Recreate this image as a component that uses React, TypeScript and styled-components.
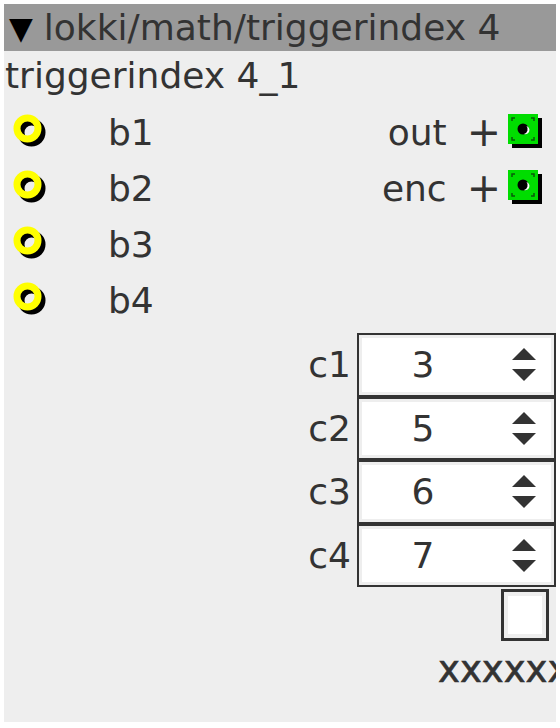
import React from "react";
import styled, { createGlobalStyle } from "styled-components";

const Global = createGlobalStyle`
  html, body { margin: 0; padding: 0; background: #ffffff; }
  body { font-family: "DejaVu Sans", "Liberation Sans", sans-serif; }
`;

const Page = styled.div`
  padding: 4px;
  width: 560px;
  height: 728px;
  box-sizing: border-box;
`;

const Panel = styled.div`
  width: 552px;
  height: 718px;
  background: #eeeeee;
  overflow: hidden;
  display: flex;
  flex-direction: column;
  color: #333333;
  font-size: 36px;
`;

const Header = styled.div`
  height: 47px;
  background: #999999;
  display: flex;
  align-items: center;
  padding-left: 5px;
  gap: 11px;
  white-space: nowrap;
`;

const Triangle = styled.span`
  color: #000000;
  font-size: 31px;
`;

const InstanceName = styled.div`
  height: 53px;
  padding-left: 1px;
  line-height: 50px;
`;

const IoArea = styled.div`
  display: flex;
  justify-content: space-between;
`;

const Column = styled.div`
  display: flex;
  flex-direction: column;
`;

const IoRow = styled.div<{ $right?: boolean }>`
  height: 56px;
  display: flex;
  align-items: center;
  justify-content: ${(p) => (p.$right ? "flex-end" : "flex-start")};
`;

const InletLabel = styled.span`
  margin-left: 58px;
`;

const OutletLabel = styled.span`
  text-align: right;
`;

const Plus = styled.span`
  font-size: 41px;
  line-height: 1;
  margin-left: 20px;
  margin-right: 6px;
`;

const Params = styled.div`
  margin-top: 5px;
  display: flex;
  flex-direction: column;
  align-items: flex-end;
`;

const ParamRow = styled.div`
  display: flex;
  align-items: center;
  gap: 6px;
`;

const SpinBox = styled.div`
  width: 199px;
  height: 63.5px;
  box-sizing: border-box;
  border: 2px solid #333333;
  background: #ffffff;
  box-shadow: inset 0 0 0 3px #eeeeee;
  display: flex;
  align-items: center;
`;

const SpinValue = styled.span`
  width: 128px;
  text-align: center;
`;

const Arrows = styled.div`
  width: 24px;
  margin-left: auto;
  margin-right: 18px;
  display: flex;
  flex-direction: column;
  gap: 9px;
`;

const CheckRow = styled.div`
  display: flex;
  justify-content: flex-end;
  padding-right: 7px;
  margin-top: 2px;
`;

const CheckBox = styled.div`
  width: 48px;
  height: 52px;
  box-sizing: border-box;
  border: 3px solid #333333;
  background: #ffffff;
  box-shadow: inset 0 0 0 4px #eeeeee;
`;

const Xs = styled.div`
  padding-left: 434px;
  margin-top: 9px;
  white-space: nowrap;
  font-size: 37px;
  line-height: 40px;
  -webkit-text-stroke: 0.6px #333333;
`;

const Inlet = () => (
  <svg width="38" height="38" viewBox="0 0 38 38" style={{ marginLeft: 8 }}>
    <circle cx="19.5" cy="19.5" r="10.5" fill="none" stroke="#000" strokeWidth="7" />
    <circle cx="15.5" cy="15.5" r="10.5" fill="none" stroke="#ffff00" strokeWidth="7" />
  </svg>
);

const Outlet = () => (
  <svg width="38" height="38" viewBox="0 0 38 38" style={{ marginRight: 11 }}>
    <rect x="5" y="5" width="30" height="30" fill="#000" />
    <rect x="1" y="1" width="30" height="30" fill="#00dd00" />
    <g stroke="#0a5a0a" strokeWidth="1.5" fill="none">
      <path d="M5 8 V5 H8" />
      <path d="M24 5 H27 V8" />
      <path d="M5 24 V27 H8" />
      <path d="M24 27 H27 V24" />
    </g>
    <circle cx="16" cy="16" r="5.5" fill="#000" />
    <path d="M19.5 13 A5 5 0 0 1 17 21 A4 4 0 0 0 19.5 13 Z" fill="#fff" />
  </svg>
);

const SpinArrows = () => (
  <Arrows>
    <svg width="24" height="12" viewBox="0 0 24 12">
      <polygon points="12,0 24,12 0,12" fill="#333" />
    </svg>
    <svg width="24" height="12" viewBox="0 0 24 12">
      <polygon points="0,0 24,0 12,12" fill="#333" />
    </svg>
  </Arrows>
);

const inlets = ["b1", "b2", "b3", "b4"];
const outlets = ["out", "enc"];
const params = [
  { label: "c1", value: 3 },
  { label: "c2", value: 5 },
  { label: "c3", value: 6 },
  { label: "c4", value: 7 },
];

export default function App() {
  return (
    <Page>
      <Global />
      <Panel>
        <Header>
          <Triangle>▼</Triangle>
          <span>lokki/math/triggerindex 4</span>
        </Header>
        <InstanceName>triggerindex 4_1</InstanceName>
        <IoArea>
          <Column>
            {inlets.map((n) => (
              <IoRow key={n}>
                <Inlet />
                <InletLabel>{n}</InletLabel>
              </IoRow>
            ))}
          </Column>
          <Column>
            {outlets.map((n) => (
              <IoRow key={n} $right>
                <OutletLabel>{n}</OutletLabel>
                <Plus>+</Plus>
                <Outlet />
              </IoRow>
            ))}
          </Column>
        </IoArea>
        <Params>
          {params.map((p) => (
            <ParamRow key={p.label}>
              <span>{p.label}</span>
              <SpinBox>
                <SpinValue>{p.value}</SpinValue>
                <SpinArrows />
              </SpinBox>
            </ParamRow>
          ))}
        </Params>
        <CheckRow>
          <CheckBox />
        </CheckRow>
        <Xs>xxxxxxxx</Xs>
      </Panel>
    </Page>
  );
}
